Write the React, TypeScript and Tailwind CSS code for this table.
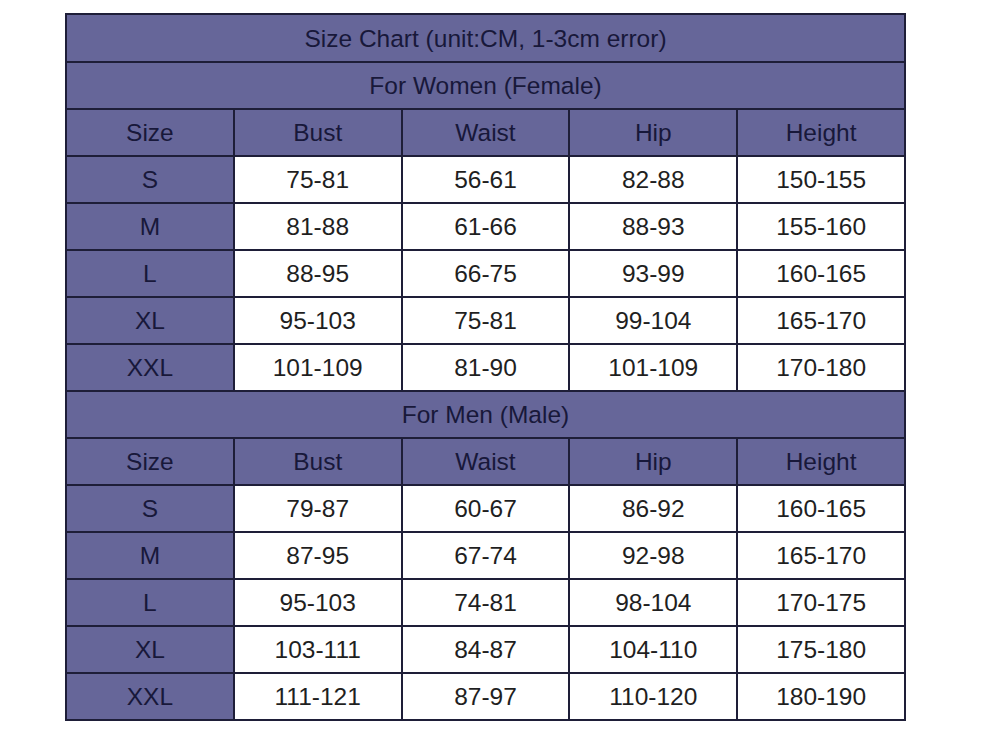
import React from 'react';

const women = [
  ['S', '75-81', '56-61', '82-88', '150-155'],
  ['M', '81-88', '61-66', '88-93', '155-160'],
  ['L', '88-95', '66-75', '93-99', '160-165'],
  ['XL', '95-103', '75-81', '99-104', '165-170'],
  ['XXL', '101-109', '81-90', '101-109', '170-180'],
];

const men = [
  ['S', '79-87', '60-67', '86-92', '160-165'],
  ['M', '87-95', '67-74', '92-98', '165-170'],
  ['L', '95-103', '74-81', '98-104', '170-175'],
  ['XL', '103-111', '84-87', '104-110', '175-180'],
  ['XXL', '111-121', '87-97', '110-120', '180-190'],
];

const headers = ['Size', 'Bust', 'Waist', 'Hip', 'Height'];

const cell = 'border-2 border-[#1e1e38] text-center align-middle p-0 pt-[2px]';
const head = cell + ' bg-[#666699] text-[#18183a]';
const data = cell + ' bg-white text-[#1f1f1f]';

function Section({ title, rows }: { title: string; rows: string[][] }) {
  return (
    <>
      <tr className="h-[47px]">
        <td colSpan={5} className={head}>{title}</td>
      </tr>
      <tr className="h-[47px]">
        {headers.map((h) => (
          <td key={h} className={head}>{h}</td>
        ))}
      </tr>
      {rows.map((r) => (
        <tr key={r[0]} className="h-[47px]">
          {r.map((v, i) => (
            <td key={i} className={i === 0 ? head : data}>{v}</td>
          ))}
        </tr>
      ))}
    </>
  );
}

export default function App() {
  return (
    <div className="w-[1000px] h-[749px] bg-white pl-[65px] pt-[13px]" style={{ fontFamily: '"Liberation Sans", Arial, sans-serif' }}>
      <table className="table-fixed border-collapse w-[841px] text-[24.5px] leading-none">
        <tbody>
          <tr className="h-[48px]">
            <td colSpan={5} className={head}>Size Chart (unit:CM, 1-3cm error)</td>
          </tr>
          <Section title="For Women (Female)" rows={women} />
          <Section title="For Men (Male)" rows={men} />
        </tbody>
      </table>
    </div>
  );
}
